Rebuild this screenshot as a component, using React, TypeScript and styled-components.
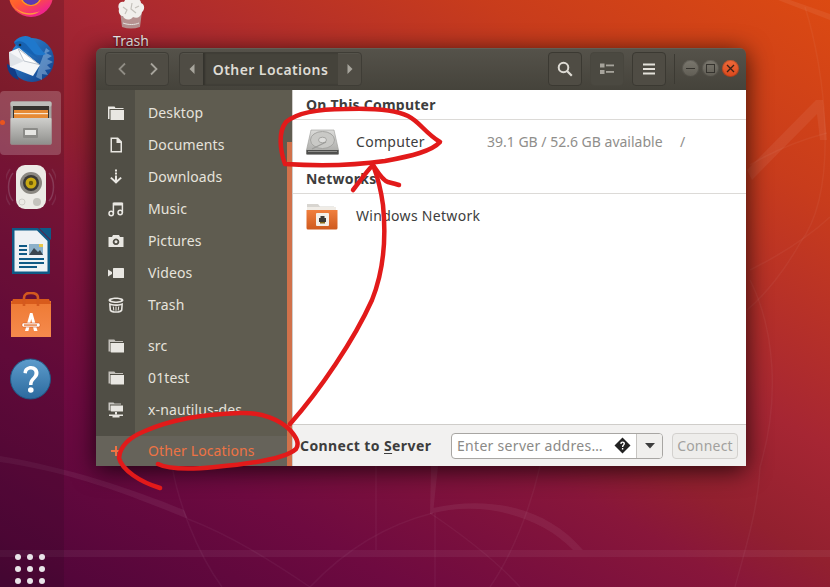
import React from "react";
import styled, { createGlobalStyle } from "styled-components";

const Global = createGlobalStyle`
  html, body { margin: 0; padding: 0; background: #5e0d42; }
  #root { width: 830px; height: 587px; overflow: hidden; }
  * { box-sizing: border-box; }
`;

const FONT = `"Noto Sans", "Open Sans", sans-serif`;

const Desktop = styled.div`
  position: relative;
  width: 830px;
  height: 587px;
  overflow: hidden;
  font-family: ${FONT};
  background: linear-gradient(30deg, #4a0537 0%, #54063a 5%, #6e0a40 22%, #88163a 40%, #92202f 47%, #a62633 58%, #c83c1c 81%, #dc4a12 100%);
`;

const WallpaperArt = styled.svg`
  position: absolute;
  inset: 0;
`;

const Dock = styled.nav`
  position: absolute;
  left: 0;
  top: 0;
  bottom: 0;
  width: 64px;
  display: flex;
  flex-direction: column;
  background: rgba(40, 10, 30, 0.2);
`;

const DockSlot = styled.div<{ $h?: number; $active?: boolean }>`
  position: relative;
  width: 61px;
  height: ${(p) => p.$h ?? 64}px;
  display: flex;
  align-items: ${(p) => (p.$h ? "flex-start" : "center")};
  justify-content: center;
  overflow: hidden;
  border-radius: 4px;
  background: ${(p) => (p.$active ? "rgba(255,255,255,0.2)" : "transparent")};
`;

const RunDot = styled.span`
  position: absolute;
  left: 0;
  top: 29px;
  width: 5px;
  height: 5px;
  border-radius: 50%;
  background: #e9541e;
`;

const AppGrid = styled.div`
  margin-top: auto;
  height: 33px;
  padding: 0 0 0 15px;
  display: grid;
  grid-template-columns: repeat(3, 6px);
  grid-auto-rows: 6px;
  gap: 6px;
`;

const AppDot = styled.span`
  width: 6px;
  height: 6px;
  border-radius: 50%;
  background: #e9e4e8;
`;

const DesktopIcon = styled.div`
  position: absolute;
  left: 106px;
  top: -3px;
  width: 50px;
  display: flex;
  flex-direction: column;
  align-items: center;
`;

const DesktopLabel = styled.span`
  margin-top: 3px;
  font-size: 14px;
  line-height: 18px;
  color: #f4f0f0;
  text-shadow: 0 1px 2px rgba(0, 0, 0, 0.7);
`;

const Window = styled.section`
  position: absolute;
  left: 96px;
  top: 48px;
  width: 650px;
  height: 418px;
  display: flex;
  flex-direction: column;
  border-radius: 6px 6px 0 0;
  overflow: hidden;
  box-shadow: 0 4px 24px rgba(0, 0, 0, 0.75);
`;

const HeaderBar = styled.header`
  height: 42px;
  flex: none;
  padding: 3px 0 0 9px;
  display: flex;
  align-items: flex-start;
  background: linear-gradient(#55524a, #45433b);
  border-top: 1px solid #625f56;
`;

const Group = styled.div<{ $w: number; $ml?: number }>`
  width: ${(p) => p.$w}px;
  margin-left: ${(p) => p.$ml ?? 0}px;
  height: 34px;
  flex: none;
  display: flex;
  align-items: center;
  border: 1px solid #3f3d36;
  border-radius: 4px;
  background: #4f4c44;
  box-shadow: inset 0 1px 0 rgba(255, 255, 255, 0.04);
`;

const NavCell = styled.div<{ $w: number; $dim?: boolean }>`
  width: ${(p) => p.$w}px;
  height: 100%;
  flex: none;
  display: flex;
  align-items: center;
  justify-content: center;
  opacity: ${(p) => (p.$dim ? 0.55 : 1)};
`;

const PathCrumb = styled.div`
  width: 135px;
  height: 100%;
  display: flex;
  align-items: center;
  justify-content: center;
  background: #45433b;
  box-shadow: inset 2px 0 2px rgba(0, 0, 0, 0.25);
  font-size: 14px;
  font-weight: 600;
  letter-spacing: 0.42px;
  color: #dedbd4;
`;

const ToolButton = styled.div<{ $ml: number; $w?: number; $flat?: boolean }>`
  width: ${(p) => p.$w ?? 34}px;
  height: 34px;
  flex: none;
  margin-left: ${(p) => p.$ml}px;
  display: flex;
  align-items: center;
  justify-content: center;
  border-radius: 4px;
  border: 1px solid ${(p) => (p.$flat ? "#48463e" : "#3b3932")};
  background: ${(p) => (p.$flat ? "#4b4941" : "#4f4c44")};
`;

const HeaderSep = styled.div`
  width: 1px;
  height: 30px;
  margin: 2px 0 0 8px;
  flex: none;
  background: #3c3a33;
`;

const WmGroup = styled.div`
  display: flex;
  gap: 3px;
  margin: 8px 0 0 7px;
`;

const WmButton = styled.div<{ $close?: boolean }>`
  width: 17px;
  height: 17px;
  border-radius: 50%;
  display: flex;
  align-items: center;
  justify-content: center;
  background: ${(p) => (p.$close ? "linear-gradient(#ef6a3a, #d9481c)" : "linear-gradient(#7b786f, #5f5c53)")};
  box-shadow: inset 0 0 0 1px rgba(0, 0, 0, 0.18);
`;

const Body = styled.div`
  flex: 1;
  min-height: 0;
  display: flex;
`;

const Sidebar = styled.aside`
  position: relative;
  width: 197px;
  flex: none;
  display: flex;
  flex-direction: column;
  padding-top: 7px;
  background: linear-gradient(to right, #504e45 39px, #5f5c50 39px);
  border-right: 1px solid #cfcdca;
`;

const PlaceGroup = styled.div<{ $mt?: number }>`
  margin-top: ${(p) => p.$mt ?? 0}px;
  display: flex;
  flex-direction: column;
`;

const Place = styled.div`
  height: 32px;
  display: flex;
  align-items: center;
  font-size: 14px;
  letter-spacing: 0.12px;
  color: #e6e3dc;
  white-space: nowrap;
  overflow: hidden;
`;

const PlaceIcon = styled.span<{ $color?: string }>`
  width: 39px;
  flex: none;
  display: flex;
  justify-content: center;
  color: ${(p) => p.$color ?? "#e9e7e2"};
`;

const PlaceText = styled.span`
  margin: 0 0 2px 13px;
`;

const OtherRow = styled(Place)`
  position: absolute;
  left: 0;
  right: 1px;
  bottom: 0;
  height: 30px;
  background: #66635a;
  color: #ee7344;
`;

const Scroll = styled.div`
  position: absolute;
  right: 0;
  top: 52px;
  bottom: 0;
  width: 5px;
  background: #d0714a;
`;

const Main = styled.main`
  flex: 1;
  min-width: 0;
  display: flex;
  flex-direction: column;
  background: #fff;
  color: #3d3d3d;
`;

const List = styled.div`
  flex: 1;
`;

const SectionTitle = styled.h3`
  margin: 0;
  height: 30px;
  padding: 5px 0 0 13px;
  font-size: 14px;
  line-height: 19px;
  font-weight: 700;
  letter-spacing: 0.24px;
  color: #3d3d3d;
  border-bottom: 1px solid #dcdad7;
`;

const LocationRow = styled.div<{ $h: number }>`
  height: ${(p) => p.$h}px;
  padding-left: 13px;
  display: flex;
  align-items: center;
  font-size: 14px;
  letter-spacing: 0.3px;
`;

const LocIcon = styled.span`
  width: 50px;
  flex: none;
  display: flex;
`;

const LocName = styled.span`
  width: 131px;
  flex: none;
  margin-bottom: 2px;
`;

const Capacity = styled.span`
  width: 193px;
  flex: none;
  margin-bottom: 2px;
  color: #8f8e8b;
  letter-spacing: 0;
`;

const MountPath = styled.span`
  margin-bottom: 2px;
  color: #8f8e8b;
`;

const ActionBar = styled.footer`
  height: 42px;
  flex: none;
  padding: 0 8px 0 7px;
  display: flex;
  align-items: center;
  background: #f2f1f0;
  border-top: 1px solid #cfcdca;
`;

const ActionLabel = styled.span`
  width: 151px;
  flex: none;
  font-size: 14px;
  font-weight: 700;
  letter-spacing: 0.39px;
  color: #3d3d3d;
  u { text-underline-offset: 2px; }
`;

const Combo = styled.div`
  width: 212px;
  height: 26px;
  flex: none;
  display: flex;
  align-items: stretch;
  border: 1px solid #a8a6a3;
  border-radius: 4px;
  background: #fff;
  overflow: hidden;
`;

const ComboInput = styled.div`
  flex: 1;
  padding: 0 5px;
  display: flex;
  align-items: center;
  justify-content: space-between;
  font-size: 14px;
  letter-spacing: 0.3px;
  color: #8b8a87;
  white-space: nowrap;
`;

const ComboArrow = styled.div`
  width: 26px;
  flex: none;
  display: flex;
  align-items: center;
  justify-content: center;
  background: #f0efed;
  border-left: 1px solid #c6c4c1;
`;

const ConnectButton = styled.div`
  width: 66px;
  height: 26px;
  margin-left: 9px;
  flex: none;
  display: flex;
  align-items: center;
  justify-content: center;
  font-size: 14px;
  letter-spacing: 0.2px;
  color: #a2a19e;
  background: #eeedeb;
  border: 1px solid #d3d1ce;
  border-radius: 4px;
`;

const Annotation = styled.svg`
  position: absolute;
  inset: 0;
  pointer-events: none;
`;

/* ---------- icons ---------- */

const Firefox = () => (
  <svg width="44" height="18" viewBox="0 0 44 18">
    <defs>
      <linearGradient id="ff" x1="0" y1="0" x2="0.5" y2="1">
        <stop offset="0" stopColor="#ff9d1e" />
        <stop offset="0.65" stopColor="#ff5a30" />
        <stop offset="1" stopColor="#f0258a" />
      </linearGradient>
    </defs>
    <circle cx="22" cy="-5" r="22" fill="url(#ff)" />
    <circle cx="22" cy="-5" r="11" fill="#ff9a20" />
    <circle cx="22" cy="-4" r="9" fill="#5a3cb0" />
    <path d="M2 2C7 12 20 16 31 11C25 17 9 17 2 2Z" fill="#ffb52a" opacity=".8" />
  </svg>
);

const Thunderbird = () => (
  <svg width="50" height="50" viewBox="0 0 50 50">
    <defs>
      <linearGradient id="tb" x1="0" y1="0" x2="1" y2="1">
        <stop offset="0" stopColor="#2f8fdc" />
        <stop offset="1" stopColor="#123c86" />
      </linearGradient>
    </defs>
    <circle cx="26" cy="26" r="22" fill="url(#tb)" />
    <path d="M1 30C1 38 6 44 13 46L8 33Z" fill="#123c86" />
    <path d="M40 14L44 17L40 19L46 22L41 25L47 28L41 31L45 35L39 36L42 41L36 40L36 46L30 43L34 30Z" fill="#bcd9f2" opacity=".4" />
    <path d="M8 8C14 1 22 0 28 6C32 10 34 16 40 20C34 23 28 20 24 17L12 15Z" fill="#1f78cc" />
    <path d="M3 18L13 14L34 31L27 42L4 33Z" fill="#f5f6f8" />
    <path d="M12 14.500L33 30.500L18 27Z" fill="#fff" stroke="#aeb6c0" strokeWidth=".8" />
    <path d="M3 18L18 27L4 33Z" fill="#dfe3e8" />
    <path d="M8 9C12 6 17 7 20 10L32 24L14 14Z" fill="#1662b2" />
    <circle cx="14" cy="11" r="1.300" fill="#17293a" />
  </svg>
);

const FileCabinet = () => (
  <svg width="42" height="44" viewBox="0 0 42 44">
    <defs>
      <linearGradient id="fc" x1="0" y1="0" x2="0" y2="1">
        <stop offset="0" stopColor="#cfcfcc" />
        <stop offset="1" stopColor="#8f8f8c" />
      </linearGradient>
    </defs>
    <rect x="0.500" y="0.500" width="41" height="43" rx="1.500" fill="#a3a3a0" />
    <rect x="0.500" y="0.500" width="41" height="5" rx="1.500" fill="#bdbdb9" />
    <rect x="3" y="5" width="36" height="13" fill="#35332f" />
    <rect x="4" y="9" width="34" height="9" fill="#e68a34" />
    <rect x="4" y="12" width="34" height="1.200" fill="#f8e6cf" />
    <rect x="0.500" y="17" width="41" height="26.500" rx="1" fill="url(#fc)" />
    <rect x="13" y="27" width="15" height="10" rx="1" fill="#8b8b88" />
    <rect x="15" y="29" width="11" height="5" fill="#e6e6e3" />
  </svg>
);

const Speaker = () => (
  <svg width="50" height="46" viewBox="0 0 50 46">
    <g fill="none" stroke="#c9c5d8" strokeOpacity=".22" strokeWidth="1.500">
      <path d="M7 9C1 16 1 30 7 37" />
      <path d="M43 9C49 16 49 30 43 37" />
      <path d="M4 5C-3 15-3 31 4 41" strokeOpacity=".12" />
      <path d="M46 5C53 15 53 31 46 41" strokeOpacity=".12" />
    </g>
    <rect x="10" y="1" width="30" height="44" rx="9" fill="#ecebe6" />
    <circle cx="25" cy="19" r="11" fill="#8b8881" />
    <circle cx="25" cy="19" r="8" fill="#3a3936" />
    <circle cx="25" cy="19" r="5.500" fill="#c9a913" />
    <circle cx="25" cy="19" r="2.200" fill="#6d5c08" />
    <circle cx="31" cy="38" r="4" fill="#c4c3bd" />
    <circle cx="16" cy="38" r="3" fill="none" stroke="#cfcec8" />
  </svg>
);

const Writer = () => (
  <svg width="40" height="48" viewBox="0 0 40 48">
    <path d="M1 1H27L39 13V46a1 1 0 0 1-1 1H1Z" fill="#0f5a86" />
    <path d="M3.500 3.500H26L36.500 14V44.500H3.500Z" fill="#eef2f5" />
    <path d="M28 1H40V13Z" fill="#0f5a86" />
    <g fill="#0f5a86">
      <rect x="8" y="18" width="8" height="2" />
      <rect x="8" y="22" width="8" height="2" />
      <rect x="8" y="26" width="8" height="2" />
      <rect x="8" y="31" width="25" height="2" />
      <rect x="8" y="35" width="25" height="2" />
      <rect x="8" y="39" width="18" height="2" />
    </g>
    <rect x="18" y="17" width="14" height="11" fill="#8cb1c9" />
    <path d="M18 28L23 21L27 25L29 23L32 28Z" fill="#3a4650" />
    <rect x="28" y="17" width="4" height="3" fill="#e9c74a" />
  </svg>
);

const SoftwareBag = () => (
  <svg width="44" height="46" viewBox="0 0 44 46">
    <defs>
      <linearGradient id="bag" x1="0" y1="0" x2="0" y2="1">
        <stop offset="0" stopColor="#ee7a34" />
        <stop offset="1" stopColor="#f58a4d" />
      </linearGradient>
    </defs>
    <path d="M2 9H42V45H2Z" fill="url(#bag)" />
    <path d="M4 7H40L42 12H2Z" fill="#d85b1c" />
    <path d="M15 14V6C15 2 18 1 22 1C26 1 29 2 29 6V14" fill="none" stroke="#d4591e" strokeWidth="2.600" />
    <path d="M16 39L21 21H23.500L28.500 39H25L22.200 27L19.400 39Z" fill="#fff" />
    <rect x="13" y="31" width="18" height="4" rx="1.400" fill="#fff" stroke="#d4591e" strokeWidth=".6" />
    <rect x="15" y="32.400" width="13" height="1.300" fill="#e36e2a" />
  </svg>
);

const HelpBall = () => (
  <svg width="44" height="44" viewBox="0 0 44 44">
    <defs>
      <linearGradient id="hb" x1="0" y1="0" x2="0" y2="1">
        <stop offset="0" stopColor="#5d9ccc" />
        <stop offset="1" stopColor="#2c6a9e" />
      </linearGradient>
    </defs>
    <circle cx="21.500" cy="22" r="20" fill="url(#hb)" stroke="#1f5885" />
    <path d="M14.500 16C14.500 11 18.500 9 22 9C26.500 9 29.500 12 29.500 16C29.500 22 23.500 22 23.500 28H20C20 21 25.500 20.500 25.500 16C25.500 14 24 12.500 21.800 12.500C19.500 12.500 18 14 17.800 16.500Z" fill="#fff" />
    <circle cx="21.800" cy="33" r="2.800" fill="#fff" />
  </svg>
);

const TrashBag = () => (
  <svg width="34" height="32" viewBox="0 0 34 32">
    <path d="M6 14H28L26 30C20 32 14 32 8 30Z" fill="#b9b4b0" opacity=".75" />
    <path d="M5 12C3 8 6 4 10 5C11 1 16 1 18 3C21 0 27 2 27 6C31 7 31 13 28 15C27 20 23 22 19 20C16 24 10 23 9 19C6 19 4 15 5 12Z" fill="#f1efec" />
    <path d="M9 10L13 13L11 17M18 6L17 12L22 16M25 9L21 11" stroke="#c4c1bb" strokeWidth="1.200" fill="none" />
    <path d="M9 26C14 28 21 28 25 26" stroke="#e6e3df" strokeWidth="1" fill="none" />
  </svg>
);

const S = ({ children, w = 16, h = 16, vb = "0 0 16 16" }: { children: React.ReactNode; w?: number; h?: number; vb?: string }) => (
  <svg width={w} height={h} viewBox={vb} fill="currentColor">{children}</svg>
);

const FolderIc = () => (
  <S>
    <path d="M0 1.500H6.500L7.500 3H15.500V4H1.500V14H0Z" />
    <path d="M2.500 5H16V15H2.500Z" />
  </S>
);
const DocIc = () => (
  <S>
    <path fillRule="evenodd" d="M2.500 .5H10L14 4.500V15.500H2.500ZM4 2V14H12.500V6H8.500V2Z" />
  </S>
);
const DownIc = () => (
  <S>
    <rect x="7" y="0.500" width="2" height="2" />
    <rect x="7" y="3.500" width="2" height="2" />
    <path d="M7 6.500H9V11L12.500 8L13.800 9.300L8 14.800L2.200 9.300L3.500 8L7 11Z" />
  </S>
);
const MusicIc = () => (
  <S>
    <g fill="none" stroke="currentColor" strokeWidth="1.500">
      <circle cx="3.200" cy="12.500" r="2.200" />
      <circle cx="12.200" cy="11.500" r="2.200" />
      <path d="M5.400 12.500V2.500H14.400V11.500" />
    </g>
    <path d="M5.400 1.500H14.400V4.500H5.400Z" />
  </S>
);
const CameraIc = () => (
  <S>
    <path fillRule="evenodd" d="M5 2H11L12 4H15.500V14H.5V4H4ZM8 5.500A3.300 3.300 0 1 0 8.001 5.500ZM8 7.300A1.500 1.500 0 1 1 7.999 7.300Z" />
  </S>
);
const VideoIc = () => (
  <S>
    <rect x="5" y="3" width="11" height="10" rx=".6" />
    <path d="M0 4.500L4 7V9L0 11.500Z" />
  </S>
);
const TrashIc = () => (
  <S>
    <path fillRule="evenodd" d="M8 .5C12 .5 15.500 1.500 15.500 3.300C15.500 5 12 6 8 6C4 6 .5 5 .5 3.300C.5 1.500 4 .5 8 .5ZM8 2C5 2 3 2.600 3 3.300C3 4 5 4.500 8 4.500C11 4.500 13 4 13 3.300C13 2.600 11 2 8 2Z" />
    <path fillRule="evenodd" d="M1 6C3 7 5 7.300 8 7.300C11 7.300 13 7 15 6L14.500 13C14.300 15 11.500 15.800 8 15.800C4.500 15.800 1.700 15 1.500 13ZM2.700 8.300L3.100 12.800C3.300 13.700 5.500 14.300 8 14.300C10.500 14.300 12.700 13.700 12.900 12.800L13.300 8.300C11.500 8.800 10 9 8 9C6 9 4.500 8.800 2.700 8.300Z" />
    <path d="M5.300 9.500L5.800 13.500M8 9.500V13.800M10.700 9.500L10.200 13.500" stroke="currentColor" strokeWidth="1" />
  </S>
);
const FolderSoft = () => (
  <S>
    <path d="M.5 1.500H6.300L7.500 3H15V4H2V13.500H.5Z" opacity=".75" />
    <path d="M2.500 5H16V14.500H3.500A1 1 0 0 1 2.500 13.500Z" />
  </S>
);
const NetFolderIc = () => (
  <S>
    <path d="M.5 0.500H5.500L6.500 1.500H13V2.500H2V8.500H.5Z" opacity=".8" />
    <path d="M2.500 3.500H15V9.500H3.500A1 1 0 0 1 2.500 8.500Z" />
    <rect x="7" y="10" width="2" height="2.500" />
    <rect x="1" y="12.500" width="14" height="1.500" />
    <rect x="4.500" y="14" width="7" height="1.500" />
  </S>
);
const PlusIc = () => (
  <S w={12} h={12} vb="0 0 12 12">
    <path d="M5 1H7V5H11V7H7V11H5V7H1V5H5Z" />
  </S>
);

const Chevron = ({ dir, color }: { dir: "l" | "r"; color: string }) => (
  <svg width="10" height="14" viewBox="0 0 10 14">
    <path d={dir === "l" ? "M8 1.500L2.500 7L8 12.500" : "M2 1.500L7.500 7L2 12.500"} fill="none" stroke={color} strokeWidth="1.800" />
  </svg>
);

const Tri = ({ dir }: { dir: "l" | "r" }) => (
  <svg width="6" height="10" viewBox="0 0 6 10">
    <path d={dir === "l" ? "M5.500 0V10L.5 5Z" : "M.5 0V10L5.500 5Z"} fill="#a8a59d" />
  </svg>
);

const SearchIc = () => (
  <svg width="16" height="16" viewBox="0 0 16 16">
    <circle cx="6.500" cy="6.500" r="4.800" fill="none" stroke="#dedbd4" strokeWidth="2" />
    <path d="M10 10L14.800 14.800" stroke="#dedbd4" strokeWidth="2.200" />
  </svg>
);

const ListIc = () => (
  <svg width="14" height="12" viewBox="0 0 14 12" fill="#a6a39b">
    <rect x="0" y="0.500" width="4.500" height="4" />
    <rect x="6" y="1.500" width="8" height="1.800" />
    <rect x="0" y="7" width="4.500" height="4" />
    <rect x="6" y="8" width="8" height="1.800" />
  </svg>
);

const MenuIc = () => (
  <svg width="14" height="12" viewBox="0 0 14 12" fill="#e4e1da">
    <rect y="0.500" width="12" height="2" x="1" />
    <rect y="5" width="12" height="2" x="1" />
    <rect y="9.500" width="12" height="2" x="1" />
  </svg>
);

const HardDisk = () => (
  <svg width="33" height="28" viewBox="0 0 33 28">
    <defs>
      <linearGradient id="hd" x1="0" y1="0" x2="0" y2="1">
        <stop offset="0" stopColor="#dcdcda" />
        <stop offset="1" stopColor="#a7a7a4" />
      </linearGradient>
    </defs>
    <path d="M5 2H28L32.500 22V26H.5V22Z" fill="url(#hd)" stroke="#9a9a97" strokeWidth=".6" />
    <path d="M.5 22H32.500V26.500H.5Z" fill="#4f4f4d" />
    <rect x="2" y="23" width="29" height="1" fill="#8d8d8a" />
    <ellipse cx="16.500" cy="12" rx="12" ry="8.500" fill="#c9c9c6" stroke="#a5a5a2" />
    <ellipse cx="16.500" cy="12" rx="4" ry="2.800" fill="#dedeDC" stroke="#a5a5a2" />
    <path d="M6 21L20 14" stroke="#9b9b98" strokeWidth="1.200" />
  </svg>
);

const NetworkFolder = () => (
  <svg width="32" height="27" viewBox="0 0 32 27">
    <defs>
      <linearGradient id="nf" x1="0" y1="0" x2="0" y2="1">
        <stop offset="0" stopColor="#f07f3e" />
        <stop offset="1" stopColor="#cf5a1e" />
      </linearGradient>
    </defs>
    <path d="M1 1H12L14 3.500H28V8H1Z" fill="#d8d5d0" />
    <path d="M1 4H30V8H1Z" fill="#f0ece6" />
    <path d="M.5 7H31.500V25A1.500 1.500 0 0 1 30 26.500H2A1.500 1.500 0 0 1 .5 25Z" fill="url(#nf)" />
    <rect x="10" y="10" width="13" height="13" rx="1" fill="#f3efe9" />
    <path d="M13 15H20V19H13Z" fill="#3a3a38" />
    <path d="M14.500 15V13H18.500V15Z" fill="#3a3a38" />
    <rect x="14" y="19" width="5" height="1.500" fill="#8a6c1a" />
  </svg>
);

const DiamondQ = () => (
  <svg width="17" height="17" viewBox="0 0 17 17">
    <path d="M8.500 .5L16.500 8.500L8.500 16.500L.5 8.500Z" fill="#222" />
    <path d="M6.200 6.800C6.300 5.300 7.300 4.500 8.600 4.500C10 4.500 11 5.300 11 6.600C11 8.300 9.300 8.300 9.300 10H7.900C7.900 7.900 9.500 7.800 9.500 6.700C9.500 6.100 9.100 5.800 8.600 5.800C8 5.800 7.700 6.200 7.600 6.900ZM7.900 11H9.300V12.400H7.900Z" fill="#fff" />
  </svg>
);

const Wallpaper = () => (
  <WallpaperArt width="830" height="587" viewBox="0 0 830 587">
    <rect x="0" y="550" width="830" height="7" fill="#ffffff" opacity=".055" />
    <g fill="#ffffff" opacity=".06">
      <path d="M0 462C70 472 130 495 188 519L184 510C130 488 70 468 0 456Z" />
      <path d="M433 514L438 466H431L430 514C480 500 540 515 573 550H583C545 505 485 496 433 508Z" />
      <path d="M747 170L816 100L823 100L827 140L820 140L817 114L752 180Z" />
      <path d="M790 0L830 14V20L778 0Z" />
    </g>
    <g fill="none" stroke="#ffffff" strokeOpacity=".045" strokeWidth="1.500">
      <path d="M172 466C178 500 195 550 222 587" />
      <path d="M188 519C230 535 270 560 310 587" />
      <path d="M310 587C345 550 385 525 433 513" />
      <path d="M376 466V550" />
      <path d="M435 513V587" />
      <path d="M540 466C530 510 512 555 490 587" />
      <path d="M430 513C470 540 500 565 520 587" />
      <path d="M750 270C780 255 805 240 830 217" />
      <path d="M805 7C825 70 840 190 800 243C785 270 765 295 747 310" />
      <path d="M750 280C775 330 780 400 760 467C758 510 745 550 735 587" />
      <path d="M750 165C775 150 800 140 827 133" />
    </g>
  </WallpaperArt>
);

const Marks = () => (
  <Annotation width="830" height="587" viewBox="0 0 830 587">
    <g fill="none" stroke="#e21a1a" strokeWidth="4.500" strokeLinecap="round" strokeLinejoin="round">
      <path d="M285 164C280 150 278 132 286 122C298 112 320 109 345 109C372 108 396 110 408 116C420 122 424 132 440 142C432 151 412 156 385 161C350 166 318 166 285 164" />
      <path d="M290 424C320 390 354 340 372 300C384 270 386 235 383 205C381 190 378 178 373 165" />
      <path d="M353 190C360 181 366 172 373 165C378 172 382 180 388 182C392 183 396 184 399 185" />
      <path d="M160 488C140 482 122 470 119 458C120 446 130 437 145 431C170 420 205 414 240 413C262 412 280 420 290 430C296 437 300 443 296 449C285 459 250 464 215 467C195 469 170 470 158 464" />
    </g>
  </Annotation>
);

const places = [
  { icon: <FolderIc />, label: "Desktop" },
  { icon: <DocIc />, label: "Documents" },
  { icon: <DownIc />, label: "Downloads" },
  { icon: <MusicIc />, label: "Music" },
  { icon: <CameraIc />, label: "Pictures" },
  { icon: <VideoIc />, label: "Videos" },
  { icon: <TrashIc />, label: "Trash" },
];

const bookmarks = [
  { icon: <FolderSoft />, label: "src" },
  { icon: <FolderSoft />, label: "01test" },
  { icon: <NetFolderIc />, label: "x-nautilus-des" },
];

export default function App() {
  return (
    <Desktop>
      <Global />
      <Wallpaper />
      <Dock>
        <DockSlot $h={27}><Firefox /></DockSlot>
        <DockSlot><Thunderbird /></DockSlot>
        <DockSlot $active><RunDot /><FileCabinet /></DockSlot>
        <DockSlot><Speaker /></DockSlot>
        <DockSlot><Writer /></DockSlot>
        <DockSlot><SoftwareBag /></DockSlot>
        <DockSlot><HelpBall /></DockSlot>
        <AppGrid>
          {Array.from({ length: 9 }, (_, i) => <AppDot key={i} />)}
        </AppGrid>
      </Dock>
      <DesktopIcon>
        <TrashBag />
        <DesktopLabel>Trash</DesktopLabel>
      </DesktopIcon>
      <Window>
        <HeaderBar>
          <Group $w={64}>
            <NavCell $w={32}><Chevron dir="l" color="#8f8c84" /></NavCell>
            <NavCell $w={32}><Chevron dir="r" color="#a6a39b" /></NavCell>
          </Group>
          <Group $w={183} $ml={10}>
            <NavCell $w={23}><Tri dir="l" /></NavCell>
            <PathCrumb>Other Locations</PathCrumb>
            <NavCell $w={23}><Tri dir="r" /></NavCell>
          </Group>
          <ToolButton $ml={186}><SearchIc /></ToolButton>
          <ToolButton $ml={8} $flat><ListIc /></ToolButton>
          <ToolButton $ml={8}><MenuIc /></ToolButton>
          <HeaderSep />
          <WmGroup>
            <WmButton>
              <svg width="9" height="9" viewBox="0 0 9 9"><path d="M0 4.500H9" stroke="#35332e" strokeWidth="1.200" /></svg>
            </WmButton>
            <WmButton>
              <svg width="9" height="9" viewBox="0 0 9 9"><rect x=".5" y=".5" width="8" height="8" fill="none" stroke="#35332e" /></svg>
            </WmButton>
            <WmButton $close>
              <svg width="9" height="9" viewBox="0 0 9 9"><path d="M1 1L8 8M8 1L1 8" stroke="#3a2016" strokeWidth="1.300" /></svg>
            </WmButton>
          </WmGroup>
        </HeaderBar>
        <Body>
          <Sidebar>
            <PlaceGroup>
              {places.map((p) => (
                <Place key={p.label}>
                  <PlaceIcon>{p.icon}</PlaceIcon>
                  <PlaceText>{p.label}</PlaceText>
                </Place>
              ))}
            </PlaceGroup>
            <PlaceGroup $mt={9}>
              {bookmarks.map((p) => (
                <Place key={p.label}>
                  <PlaceIcon>{p.icon}</PlaceIcon>
                  <PlaceText>{p.label}</PlaceText>
                </Place>
              ))}
            </PlaceGroup>
            <OtherRow>
              <PlaceIcon $color="#ee7344"><PlusIc /></PlaceIcon>
              <PlaceText>Other Locations</PlaceText>
            </OtherRow>
            <Scroll />
          </Sidebar>
          <Main>
            <List>
              <SectionTitle>On This Computer</SectionTitle>
              <LocationRow $h={44}>
                <LocIcon><HardDisk /></LocIcon>
                <LocName>Computer</LocName>
                <Capacity>39.1 GB / 52.6 GB available</Capacity>
                <MountPath>/</MountPath>
              </LocationRow>
              <SectionTitle>Networks</SectionTitle>
              <LocationRow $h={44}>
                <LocIcon><NetworkFolder /></LocIcon>
                <LocName>Windows Network</LocName>
              </LocationRow>
            </List>
            <ActionBar>
              <ActionLabel>Connect to <u>S</u>erver</ActionLabel>
              <Combo>
                <ComboInput>Enter server addres…<DiamondQ /></ComboInput>
                <ComboArrow>
                  <svg width="10" height="6" viewBox="0 0 10 6"><path d="M0 0H10L5 5.500Z" fill="#3d3d3d" /></svg>
                </ComboArrow>
              </Combo>
              <ConnectButton>Connect</ConnectButton>
            </ActionBar>
          </Main>
        </Body>
      </Window>
      <Marks />
    </Desktop>
  );
}
